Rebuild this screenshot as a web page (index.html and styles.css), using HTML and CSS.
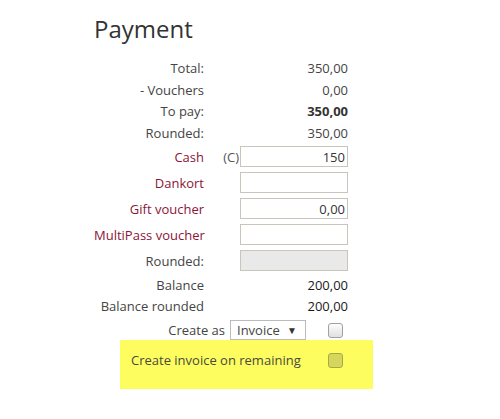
FILE: index.html
```html
<!DOCTYPE html>
<html lang="en">
<head>
  <meta charset="UTF-8">
  <title>Payment</title>
  <link rel="stylesheet" href="styles.css">
</head>
<body>
  <div class="payment">
    <h1>Payment</h1>

    <div class="grid totals">
      <span class="label">Total:</span><span></span><span class="value">350,00</span>
      <span class="label">- Vouchers</span><span></span><span class="value">0,00</span>
      <span class="label">To pay:</span><span></span><span class="value strong">350,00</span>
      <span class="label">Rounded:</span><span></span><span class="value">350,00</span>
    </div>

    <div class="grid methods">
      <label class="label method" for="cash">Cash</label><span class="key">(C)</span><input class="amount" id="cash" value="150">
      <label class="label method" for="dankort">Dankort</label><span></span><input class="amount" id="dankort">
      <label class="label method" for="gift">Gift voucher</label><span></span><input class="amount" id="gift" value="0,00">
      <label class="label method" for="multipass">MultiPass voucher</label><span></span><input class="amount" id="multipass">
      <label class="label" for="rounded">Rounded:</label><span></span><input class="amount" id="rounded" disabled>
    </div>

    <div class="grid totals">
      <span class="label">Balance</span><span></span><span class="value dark">200,00</span>
      <span class="label">Balance rounded</span><span></span><span class="value dark">200,00</span>
    </div>

    <div class="create-row">
      <span class="label">Create as</span>
      <span class="select-wrap">
        <select class="select">
          <option>Invoice</option>
          <option>Order</option>
        </select>
      </span>
      <input type="checkbox" class="check">
    </div>

    <div class="remaining">
      <span class="label">Create invoice on remaining</span>
      <input type="checkbox" class="check dim">
    </div>
  </div>
</body>
</html>
```

FILE: styles.css
```css
body {
  margin: 0;
  background-color: white;
  font-family: 'Open Sans', sans-serif;
  font-size: 13px;
  color: #444;
}
.payment {
  margin-left: 94px;
  width: 254px;
}
h1 {
  font-size: 24px;
  font-weight: normal;
  color: #333;
  margin: 0;
  padding-top: 13px;
  height: 44px;
  line-height: 32px;
}
.grid {
  display: grid;
  grid-template-columns: 110px 36px 108px;
  align-items: center;
}
.totals {
  grid-auto-rows: 21.7px;
}
.methods {
  grid-auto-rows: 26px;
}
.label {
  text-align: right;
  white-space: nowrap;
}
.method {
  color: #8b1538;
}
.value {
  text-align: right;
}
.strong {
  font-weight: bold;
  color: #333;
}
.dark {
  color: #1a1a1a;
}
.key {
  text-align: right;
  padding-right: 1px;
  color: #555;
}
.amount {
  box-sizing: border-box;
  width: 108px;
  height: 21px;
  border: 1px solid #c9c5bd;
  padding: 0 2px;
  font-family: inherit;
  font-size: 13px;
  color: #333;
  text-align: right;
  background-color: white;
  outline: none;
}
.amount:disabled {
  background-color: #e9e9e9;
}
.create-row {
  display: flex;
  justify-content: flex-end;
  align-items: center;
  height: 20px;
  margin-top: 3px;
  padding-right: 5px;
}
.create-row .label {
  margin-right: 5px;
}
.select-wrap {
  position: relative;
  margin-right: 22px;
}
.select-wrap::after {
  content: "▼";
  position: absolute;
  right: 9px;
  top: 3px;
  font-size: 10px;
  color: #333;
  pointer-events: none;
}
.select {
  appearance: none;
  -webkit-appearance: none;
  box-sizing: border-box;
  width: 76px;
  height: 20px;
  border: 1px solid #bbb;
  border-radius: 0;
  background-color: white;
  padding: 0 0 0 6px;
  font-family: inherit;
  font-size: 13px;
  color: #444;
}
.check {
  appearance: none;
  -webkit-appearance: none;
  box-sizing: border-box;
  width: 15px;
  height: 15px;
  margin: 0;
  border: 1px solid #a0a0a0;
  border-radius: 3px;
  background: linear-gradient(#fdfdfd, #e0e0e0);
}
.check.dim {
  border-color: #a8a845;
  background: #d6d65c;
}
.remaining {
  display: flex;
  justify-content: space-between;
  align-items: center;
  box-sizing: border-box;
  width: 253px;
  height: 49px;
  margin-left: 26px;
  padding: 0 30px 9px 11px;
  background-color: #fdfd60;
}
.remaining .label {
  color: #4a4a3a;
}
```
